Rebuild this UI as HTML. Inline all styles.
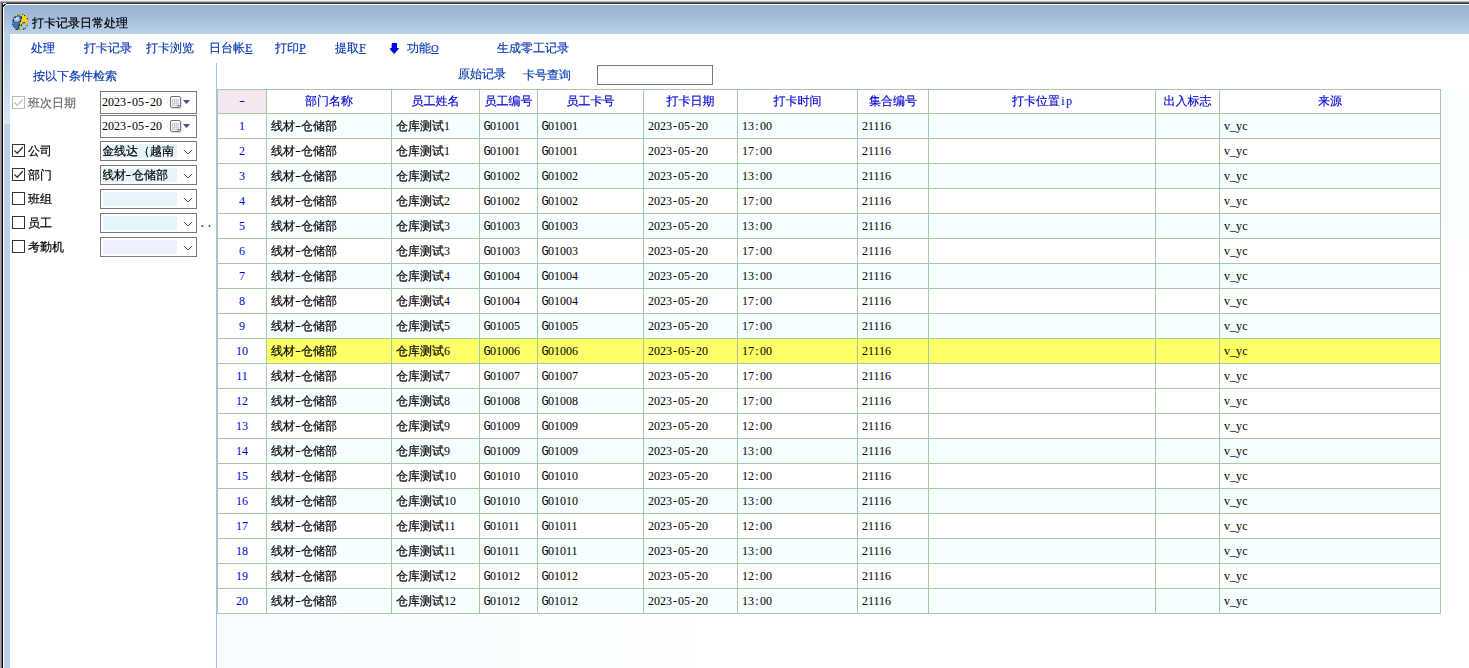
<!DOCTYPE html>
<html lang="zh-CN">
<head>
<meta charset="utf-8">
<title>打卡记录日常处理</title>
<style>
*{box-sizing:border-box;margin:0;padding:0}
html,body{width:1469px;height:668px;overflow:hidden;background:#fff}
body{position:relative;font-family:"Liberation Mono","WenQuanYi Zen Hei","Noto Sans CJK SC",monospace;font-size:12px;line-height:14px;color:#000;-webkit-text-stroke:0.2px}
.l{font-family:"Liberation Serif",serif;letter-spacing:0;-webkit-text-stroke:0;line-height:0}
.l b{display:inline-block;width:6px;text-align:center;font-weight:normal}
.l b.g{font-family:"Liberation Mono",monospace;width:auto;margin:0 -0.6px}
.l b.wd{transform:scaleX(1.5)}
.abs{position:absolute}
/* window chrome */
#s0{left:0;top:0;width:1469px;height:1px;background:#f2f2f2}
#s1{left:0;top:1px;width:1469px;height:1px;background:#b4b4b4}
#s2{left:0;top:2px;width:1469px;height:1px;background:#6c6c6c}
#s3{left:2px;top:3px;width:1467px;height:1px;background:#2e2e2e}
#l0{left:0;top:2px;width:1px;height:666px;background:#a6a6a6}
#l1{left:1px;top:3px;width:1px;height:665px;background:#707070}
#l2{left:2px;top:3px;width:1px;height:665px;background:#040404}
#l3{left:3px;top:4px;width:1px;height:664px;background:#fff}
#hl{left:3px;top:4px;width:1466px;height:1px;background:#fff}
#tb{left:4px;top:5px;width:1465px;height:29px;background:linear-gradient(#98b2d2,#a3bcda 40%,#b9d1ea)}
#lb{left:4px;top:34px;width:6px;height:634px;background:linear-gradient(#b9d1ea 0,#bcd3eb 25px,#dbe7f5 90px,#b9d1ea 90px)}
#title{left:32px;top:17px;white-space:nowrap}
#icon{left:12px;top:14px;width:16px;height:16px}
/* menu */
.m{position:absolute;top:42px;color:#0a3cb4;white-space:nowrap;-webkit-text-stroke:0.18px}
.m u{text-decoration:underline;text-decoration-thickness:1px;text-underline-offset:1px;font-size:12px;-webkit-text-stroke:0.2px}
.b{position:absolute;color:#0a3cb4;white-space:nowrap;-webkit-text-stroke:0.18px}
/* left panel */
.cb{position:absolute;left:12px;width:13px;height:13px;border:1px solid #333;background:#fff}
.cb.dis{border-color:#bcbcbc}
.cb svg{position:absolute;left:0;top:0}
.lab{position:absolute;left:28px;white-space:nowrap}
.date{position:absolute;left:100px;width:97px;height:23px;border:1px solid #7a7a7a;background:#fff}
.date span{position:absolute;left:1px;top:3px;line-height:14px}
.date svg{position:absolute;left:69px;top:4px}
.combo{position:absolute;left:100px;width:97px;height:20px;border:1px solid #7a7a7a;background:#fff}
.combo i{position:absolute;left:2px;top:2px;width:74px;height:14px;background:#e4f5fc;font-style:normal;padding-top:1px;text-indent:-1px;white-space:nowrap;overflow:hidden}
.combo svg{position:absolute;left:82px;top:7px}
/* grid */
#gbg{left:217px;top:89px;width:1252px;height:579px;background:linear-gradient(to right,#f7fdff,#f9feff 300px,#fff 480px) 0 525px/700px 54px no-repeat,linear-gradient(#f9feff,#fafeff 120px,#fff 180px) 1224px 0/28px 200px no-repeat,#fff}
#vline{left:216px;top:63px;width:1px;height:605px;background:#9fc3ee}
#grid{left:217px;top:89px;width:1224px;height:525px;background:#a4cba4;padding:1px;display:grid;gap:1px;
 grid-template-columns:48px 124px 87px 57px 105px 93px 119px 70px 226px 63px 220px;
 grid-template-rows:23px repeat(20,24px)}
#grid div{overflow:hidden;white-space:nowrap;line-height:14px;padding-top:6px}
.h{background:#fff;color:#0000d2;text-align:center;-webkit-text-stroke:0.15px;padding-top:5px !important}
.h0{background:#f6e6f0}
.n{background:#fff;color:#0000d2;text-align:center}
.d{padding-left:4px}
.w{background:#fff}.c{background:#f6feff}.y{background:#ffff66}
</style>
</head>
<body>
<div class="abs" id="s0"></div><div class="abs" id="s1"></div><div class="abs" id="s2"></div><div class="abs" id="s3"></div>
<div class="abs" id="l0"></div><div class="abs" id="l1"></div><div class="abs" id="l2"></div>
<div class="abs" id="hl"></div><div class="abs" id="l3"></div>
<div class="abs" id="tb"></div><div class="abs" id="lb"></div>
<svg class="abs" style="left:2px;top:2px" width="5" height="6" viewBox="0 0 5 6" shape-rendering="crispEdges">
 <rect x="0" y="0" width="5" height="1" fill="#7a7a7a"/>
 <rect x="0" y="1" width="1" height="5" fill="#1c1c24"/>
 <rect x="1" y="1" width="3" height="1" fill="#e9ecf1"/><rect x="4" y="1" width="1" height="1" fill="#2e2e2e"/>
 <rect x="1" y="2" width="1" height="1" fill="#dfe5ec"/><rect x="2" y="2" width="2" height="1" fill="#262626"/><rect x="4" y="2" width="1" height="1" fill="#fff"/>
 <rect x="1" y="3" width="2" height="1" fill="#20242c"/><rect x="3" y="3" width="1" height="1" fill="#fff"/><rect x="4" y="3" width="1" height="1" fill="#a9c0dc"/>
 <rect x="1" y="4" width="1" height="1" fill="#2a2e36"/><rect x="2" y="4" width="1" height="1" fill="#fff"/><rect x="3" y="4" width="2" height="1" fill="#9ab4d3"/>
 <rect x="1" y="5" width="1" height="1" fill="#fff"/><rect x="2" y="5" width="3" height="1" fill="#9ab4d3"/>
</svg>
<svg class="abs" id="icon" viewBox="0 0 16 16">
 <circle cx="8" cy="8" r="7.800" fill="#3a78b2"/>
 <ellipse cx="4.700" cy="5" rx="2.900" ry="2.600" fill="#a9c3e0"/>
 <ellipse cx="5" cy="4.600" rx="1.500" ry="1.300" fill="#c9dbee"/>
 <path d="M6.500 .3L10 .2A7.800 7.800 0 0 1 15.800 8L15.800 10.500L14.600 10.300C14 9 12.800 8.600 11.800 8.800C10.600 9.200 9.600 10.400 9.300 12L9 15.500L7.200 15.300C7 13 7.200 11 7.800 9.500C8.600 7.500 9.600 5.500 9.400 3.500C9.300 2.300 8.400 1.400 6.500 .3Z" fill="#ffd400"/>
 <path d="M14.600 10.300L15.800 10.500A7.800 7.800 0 0 1 9 15.750L9.300 12C9.600 10.400 10.600 9.200 11.800 8.800C12.800 8.600 14 9 14.600 10.300Z" fill="#a6bfdc"/>
 <path d="M2.300 1.800h1v1h-1zM3.900 1h1v1h-1z" fill="#ffd400"/>
 <path d="M9.200 2.200L9.500 5M9 6.300L8.200 8.200M7.600 9.500L6.900 12M6.800 12.500L7 14.500M10.400 9.300C11 8.700 12 8.400 13 8.700M9.300 10.300L9.100 12.200M11 15.200L12.500 14.800M13.200 14.300L14 13.600M15.200 11L15.600 11.800M10 .3L10.800 .8M12 1.300L13 2M15.200 4L15.600 5.200M2 3.600L4.400 2.600M1.400 5.400L1.400 7.400M.4 10L.8 10.800M1.400 12.200L2 13M2.600 14L3.400 14.600M3.600 15.200L5.800 15.400" fill="none" stroke="#0a0a0a" stroke-width="1"/>
</svg>
<div class="abs" id="title">打卡记录日常处理</div>

<div class="m" style="left:31px">处理</div>
<div class="m" style="left:84px">打卡记录</div>
<div class="m" style="left:146px">打卡浏览</div>
<div class="m" style="left:209px">日台帐<u class="l">E</u></div>
<div class="m" style="left:275px">打印<u class="l">P</u></div>
<div class="m" style="left:335px">提取<u class="l">F</u></div>
<svg class="abs" style="left:389px;top:43px" width="11" height="12" viewBox="0 0 11 12">
 <path d="M2.500 .8h5v5h2.300L5 11.300 .2 5.800h2.300z" fill="#2a2a10" opacity=".8"/>
 <path d="M3 0h5v5h2.200L5.500 10.400 .8 5h2.200z" fill="#0000ff"/>
</svg>
<div class="m" style="left:407px">功能<u class="l" style="font-size:10.500px">O</u></div>
<div class="m" style="left:497px">生成零工记录</div>

<div class="b" style="left:33px;top:70px">按以下条件检索</div>
<div class="b" style="left:458px;top:68px">原始记录</div>
<div class="b" style="left:523px;top:69px">卡号查询</div>
<div class="abs" style="left:597px;top:65px;width:116px;height:20px;border:1px solid #7a7a7a;background:#fff"></div>

<div class="cb dis" style="top:96px"><svg width="11" height="11" viewBox="0 0 11 11"><path d="M1.500 5.500l2.800 2.800 5.400-6" fill="none" stroke="#bcbcbc" stroke-width="1.2"/></svg></div>
<div class="lab" style="top:97px;color:#6a6a6a">班次日期</div>
<div class="date" style="top:91px"><span class="l">2023<b>-</b>05<b>-</b>20</span><svg width="22" height="14" viewBox="0 0 22 14"><rect x="1.500" y="1.500" width="10" height="11" rx="1.500" fill="#5a4a46" opacity=".35"/><rect x=".5" y=".5" width="10" height="11" rx="1.500" fill="#fdfdfe" stroke="#7d6e6c"/><rect x="2" y="3" width="7" height="7" fill="#c3cbdc"/><path d="M3 4h1v1h-1zM5 4h1v1h-1zM7 4h1v1h-1zM3 6h1v1h-1zM5 6h1v1h-1zM7 6h1v1h-1zM3 8h1v1h-1zM5 8h1v1h-1zM7 8h1v1h-1z" fill="#fff"/><path d="M8 11.500V9.500h2.500" fill="#fff" stroke="#7d6e6c"/><path d="M13 4h7L16.500 8z" fill="#3c5080"/></svg></div>
<div class="date" style="top:115px"><span class="l">2023<b>-</b>05<b>-</b>20</span><svg width="22" height="14" viewBox="0 0 22 14"><rect x="1.500" y="1.500" width="10" height="11" rx="1.500" fill="#5a4a46" opacity=".35"/><rect x=".5" y=".5" width="10" height="11" rx="1.500" fill="#fdfdfe" stroke="#7d6e6c"/><rect x="2" y="3" width="7" height="7" fill="#c3cbdc"/><path d="M3 4h1v1h-1zM5 4h1v1h-1zM7 4h1v1h-1zM3 6h1v1h-1zM5 6h1v1h-1zM7 6h1v1h-1zM3 8h1v1h-1zM5 8h1v1h-1zM7 8h1v1h-1z" fill="#fff"/><path d="M8 11.500V9.500h2.500" fill="#fff" stroke="#7d6e6c"/><path d="M13 4h7L16.500 8z" fill="#3c5080"/></svg></div>

<div class="cb" style="top:144px"><svg width="11" height="11" viewBox="0 0 11 11"><path d="M1.500 5.500l2.800 2.800 5.400-6" fill="none" stroke="#333" stroke-width="1.300"/></svg></div><div class="lab" style="top:145px">公司</div>
<div class="cb" style="top:168px"><svg width="11" height="11" viewBox="0 0 11 11"><path d="M1.500 5.500l2.800 2.800 5.400-6" fill="none" stroke="#333" stroke-width="1.300"/></svg></div><div class="lab" style="top:169px">部门</div>
<div class="cb" style="top:192px"></div><div class="lab" style="top:193px">班组</div>
<div class="cb" style="top:216px"></div><div class="lab" style="top:217px">员工</div>
<div class="cb" style="top:240px"></div><div class="lab" style="top:241px">考勤机</div>

<div class="combo" style="top:141px"><i>金线达（越南</i><svg width="10" height="6" viewBox="0 0 10 6"><path d="M.8 .8L5 5l4.200-4.200" fill="none" stroke="#4a4a4a" stroke-width="1"/></svg></div>
<div class="combo" style="top:165px"><i>线材<span class="l"><b class="wd">-</b></span>仓储部</i><svg width="10" height="6" viewBox="0 0 10 6"><path d="M.8 .8L5 5l4.200-4.200" fill="none" stroke="#4a4a4a" stroke-width="1"/></svg></div>
<div class="combo" style="top:189px"><i></i><svg width="10" height="6" viewBox="0 0 10 6"><path d="M.8 .8L5 5l4.200-4.200" fill="none" stroke="#4a4a4a" stroke-width="1"/></svg></div>
<div class="combo" style="top:213px"><i></i><svg width="10" height="6" viewBox="0 0 10 6"><path d="M.8 .8L5 5l4.200-4.200" fill="none" stroke="#4a4a4a" stroke-width="1"/></svg></div>
<div class="combo" style="top:237px"><i style="background:#eef0ff"></i><svg width="10" height="6" viewBox="0 0 10 6"><path d="M.8 .8L5 5l4.200-4.200" fill="none" stroke="#4a4a4a" stroke-width="1"/></svg></div>
<div class="b" style="left:198.500px;top:217px;font-family:'Liberation Mono',monospace;-webkit-text-stroke:0">..</div>

<div class="abs" id="gbg"></div>
<div class="abs" id="vline"></div>
<div class="abs" id="grid">
<div class="h h0"><span class="l"><b class="wd">-</b></span></div>
<div class="h">部门名称</div>
<div class="h">员工姓名</div>
<div class="h">员工编号</div>
<div class="h">员工卡号</div>
<div class="h">打卡日期</div>
<div class="h">打卡时间</div>
<div class="h">集合编号</div>
<div class="h">打卡位置<span class="l"><b>i</b><b>p</b></span></div>
<div class="h">出入标志</div>
<div class="h">来源</div>
<div class="n"><span class="l">1</span></div>
<div class="d c">线材<span class="l"><b class="wd">-</b></span>仓储部</div>
<div class="d c">仓库测试<span class="l">1</span></div>
<div class="d c"><span class="l"><b class="g">G</b>01001</span></div>
<div class="d c"><span class="l"><b class="g">G</b>01001</span></div>
<div class="d c"><span class="l">2023<b>-</b>05<b>-</b>20</span></div>
<div class="d c"><span class="l">13<b>:</b>00</span></div>
<div class="d c"><span class="l">21116</span></div>
<div class="d c"></div>
<div class="d c"></div>
<div class="d c"><span class="l"><b>v</b><b>_</b><b>y</b><b>c</b></span></div>
<div class="n"><span class="l">2</span></div>
<div class="d w">线材<span class="l"><b class="wd">-</b></span>仓储部</div>
<div class="d w">仓库测试<span class="l">1</span></div>
<div class="d w"><span class="l"><b class="g">G</b>01001</span></div>
<div class="d w"><span class="l"><b class="g">G</b>01001</span></div>
<div class="d w"><span class="l">2023<b>-</b>05<b>-</b>20</span></div>
<div class="d w"><span class="l">17<b>:</b>00</span></div>
<div class="d w"><span class="l">21116</span></div>
<div class="d w"></div>
<div class="d w"></div>
<div class="d w"><span class="l"><b>v</b><b>_</b><b>y</b><b>c</b></span></div>
<div class="n"><span class="l">3</span></div>
<div class="d c">线材<span class="l"><b class="wd">-</b></span>仓储部</div>
<div class="d c">仓库测试<span class="l">2</span></div>
<div class="d c"><span class="l"><b class="g">G</b>01002</span></div>
<div class="d c"><span class="l"><b class="g">G</b>01002</span></div>
<div class="d c"><span class="l">2023<b>-</b>05<b>-</b>20</span></div>
<div class="d c"><span class="l">13<b>:</b>00</span></div>
<div class="d c"><span class="l">21116</span></div>
<div class="d c"></div>
<div class="d c"></div>
<div class="d c"><span class="l"><b>v</b><b>_</b><b>y</b><b>c</b></span></div>
<div class="n"><span class="l">4</span></div>
<div class="d w">线材<span class="l"><b class="wd">-</b></span>仓储部</div>
<div class="d w">仓库测试<span class="l">2</span></div>
<div class="d w"><span class="l"><b class="g">G</b>01002</span></div>
<div class="d w"><span class="l"><b class="g">G</b>01002</span></div>
<div class="d w"><span class="l">2023<b>-</b>05<b>-</b>20</span></div>
<div class="d w"><span class="l">17<b>:</b>00</span></div>
<div class="d w"><span class="l">21116</span></div>
<div class="d w"></div>
<div class="d w"></div>
<div class="d w"><span class="l"><b>v</b><b>_</b><b>y</b><b>c</b></span></div>
<div class="n"><span class="l">5</span></div>
<div class="d c">线材<span class="l"><b class="wd">-</b></span>仓储部</div>
<div class="d c">仓库测试<span class="l">3</span></div>
<div class="d c"><span class="l"><b class="g">G</b>01003</span></div>
<div class="d c"><span class="l"><b class="g">G</b>01003</span></div>
<div class="d c"><span class="l">2023<b>-</b>05<b>-</b>20</span></div>
<div class="d c"><span class="l">13<b>:</b>00</span></div>
<div class="d c"><span class="l">21116</span></div>
<div class="d c"></div>
<div class="d c"></div>
<div class="d c"><span class="l"><b>v</b><b>_</b><b>y</b><b>c</b></span></div>
<div class="n"><span class="l">6</span></div>
<div class="d w">线材<span class="l"><b class="wd">-</b></span>仓储部</div>
<div class="d w">仓库测试<span class="l">3</span></div>
<div class="d w"><span class="l"><b class="g">G</b>01003</span></div>
<div class="d w"><span class="l"><b class="g">G</b>01003</span></div>
<div class="d w"><span class="l">2023<b>-</b>05<b>-</b>20</span></div>
<div class="d w"><span class="l">17<b>:</b>00</span></div>
<div class="d w"><span class="l">21116</span></div>
<div class="d w"></div>
<div class="d w"></div>
<div class="d w"><span class="l"><b>v</b><b>_</b><b>y</b><b>c</b></span></div>
<div class="n"><span class="l">7</span></div>
<div class="d c">线材<span class="l"><b class="wd">-</b></span>仓储部</div>
<div class="d c">仓库测试<span class="l">4</span></div>
<div class="d c"><span class="l"><b class="g">G</b>01004</span></div>
<div class="d c"><span class="l"><b class="g">G</b>01004</span></div>
<div class="d c"><span class="l">2023<b>-</b>05<b>-</b>20</span></div>
<div class="d c"><span class="l">13<b>:</b>00</span></div>
<div class="d c"><span class="l">21116</span></div>
<div class="d c"></div>
<div class="d c"></div>
<div class="d c"><span class="l"><b>v</b><b>_</b><b>y</b><b>c</b></span></div>
<div class="n"><span class="l">8</span></div>
<div class="d w">线材<span class="l"><b class="wd">-</b></span>仓储部</div>
<div class="d w">仓库测试<span class="l">4</span></div>
<div class="d w"><span class="l"><b class="g">G</b>01004</span></div>
<div class="d w"><span class="l"><b class="g">G</b>01004</span></div>
<div class="d w"><span class="l">2023<b>-</b>05<b>-</b>20</span></div>
<div class="d w"><span class="l">17<b>:</b>00</span></div>
<div class="d w"><span class="l">21116</span></div>
<div class="d w"></div>
<div class="d w"></div>
<div class="d w"><span class="l"><b>v</b><b>_</b><b>y</b><b>c</b></span></div>
<div class="n"><span class="l">9</span></div>
<div class="d c">线材<span class="l"><b class="wd">-</b></span>仓储部</div>
<div class="d c">仓库测试<span class="l">5</span></div>
<div class="d c"><span class="l"><b class="g">G</b>01005</span></div>
<div class="d c"><span class="l"><b class="g">G</b>01005</span></div>
<div class="d c"><span class="l">2023<b>-</b>05<b>-</b>20</span></div>
<div class="d c"><span class="l">17<b>:</b>00</span></div>
<div class="d c"><span class="l">21116</span></div>
<div class="d c"></div>
<div class="d c"></div>
<div class="d c"><span class="l"><b>v</b><b>_</b><b>y</b><b>c</b></span></div>
<div class="n"><span class="l">10</span></div>
<div class="d y">线材<span class="l"><b class="wd">-</b></span>仓储部</div>
<div class="d y">仓库测试<span class="l">6</span></div>
<div class="d y"><span class="l"><b class="g">G</b>01006</span></div>
<div class="d y"><span class="l"><b class="g">G</b>01006</span></div>
<div class="d y"><span class="l">2023<b>-</b>05<b>-</b>20</span></div>
<div class="d y"><span class="l">17<b>:</b>00</span></div>
<div class="d y"><span class="l">21116</span></div>
<div class="d y"></div>
<div class="d y"></div>
<div class="d y"><span class="l"><b>v</b><b>_</b><b>y</b><b>c</b></span></div>
<div class="n"><span class="l">11</span></div>
<div class="d w">线材<span class="l"><b class="wd">-</b></span>仓储部</div>
<div class="d w">仓库测试<span class="l">7</span></div>
<div class="d w"><span class="l"><b class="g">G</b>01007</span></div>
<div class="d w"><span class="l"><b class="g">G</b>01007</span></div>
<div class="d w"><span class="l">2023<b>-</b>05<b>-</b>20</span></div>
<div class="d w"><span class="l">17<b>:</b>00</span></div>
<div class="d w"><span class="l">21116</span></div>
<div class="d w"></div>
<div class="d w"></div>
<div class="d w"><span class="l"><b>v</b><b>_</b><b>y</b><b>c</b></span></div>
<div class="n"><span class="l">12</span></div>
<div class="d c">线材<span class="l"><b class="wd">-</b></span>仓储部</div>
<div class="d c">仓库测试<span class="l">8</span></div>
<div class="d c"><span class="l"><b class="g">G</b>01008</span></div>
<div class="d c"><span class="l"><b class="g">G</b>01008</span></div>
<div class="d w"><span class="l">2023<b>-</b>05<b>-</b>20</span></div>
<div class="d w"><span class="l">17<b>:</b>00</span></div>
<div class="d w"><span class="l">21116</span></div>
<div class="d w"></div>
<div class="d w"></div>
<div class="d w"><span class="l"><b>v</b><b>_</b><b>y</b><b>c</b></span></div>
<div class="n"><span class="l">13</span></div>
<div class="d w">线材<span class="l"><b class="wd">-</b></span>仓储部</div>
<div class="d w">仓库测试<span class="l">9</span></div>
<div class="d w"><span class="l"><b class="g">G</b>01009</span></div>
<div class="d w"><span class="l"><b class="g">G</b>01009</span></div>
<div class="d w"><span class="l">2023<b>-</b>05<b>-</b>20</span></div>
<div class="d w"><span class="l">12<b>:</b>00</span></div>
<div class="d w"><span class="l">21116</span></div>
<div class="d w"></div>
<div class="d w"></div>
<div class="d w"><span class="l"><b>v</b><b>_</b><b>y</b><b>c</b></span></div>
<div class="n"><span class="l">14</span></div>
<div class="d c">线材<span class="l"><b class="wd">-</b></span>仓储部</div>
<div class="d c">仓库测试<span class="l">9</span></div>
<div class="d c"><span class="l"><b class="g">G</b>01009</span></div>
<div class="d c"><span class="l"><b class="g">G</b>01009</span></div>
<div class="d c"><span class="l">2023<b>-</b>05<b>-</b>20</span></div>
<div class="d c"><span class="l">13<b>:</b>00</span></div>
<div class="d c"><span class="l">21116</span></div>
<div class="d c"></div>
<div class="d c"></div>
<div class="d c"><span class="l"><b>v</b><b>_</b><b>y</b><b>c</b></span></div>
<div class="n"><span class="l">15</span></div>
<div class="d w">线材<span class="l"><b class="wd">-</b></span>仓储部</div>
<div class="d w">仓库测试<span class="l">10</span></div>
<div class="d w"><span class="l"><b class="g">G</b>01010</span></div>
<div class="d w"><span class="l"><b class="g">G</b>01010</span></div>
<div class="d w"><span class="l">2023<b>-</b>05<b>-</b>20</span></div>
<div class="d w"><span class="l">12<b>:</b>00</span></div>
<div class="d w"><span class="l">21116</span></div>
<div class="d w"></div>
<div class="d w"></div>
<div class="d w"><span class="l"><b>v</b><b>_</b><b>y</b><b>c</b></span></div>
<div class="n"><span class="l">16</span></div>
<div class="d c">线材<span class="l"><b class="wd">-</b></span>仓储部</div>
<div class="d c">仓库测试<span class="l">10</span></div>
<div class="d c"><span class="l"><b class="g">G</b>01010</span></div>
<div class="d c"><span class="l"><b class="g">G</b>01010</span></div>
<div class="d c"><span class="l">2023<b>-</b>05<b>-</b>20</span></div>
<div class="d c"><span class="l">13<b>:</b>00</span></div>
<div class="d c"><span class="l">21116</span></div>
<div class="d c"></div>
<div class="d c"></div>
<div class="d c"><span class="l"><b>v</b><b>_</b><b>y</b><b>c</b></span></div>
<div class="n"><span class="l">17</span></div>
<div class="d w">线材<span class="l"><b class="wd">-</b></span>仓储部</div>
<div class="d w">仓库测试<span class="l">11</span></div>
<div class="d w"><span class="l"><b class="g">G</b>01011</span></div>
<div class="d w"><span class="l"><b class="g">G</b>01011</span></div>
<div class="d w"><span class="l">2023<b>-</b>05<b>-</b>20</span></div>
<div class="d w"><span class="l">12<b>:</b>00</span></div>
<div class="d w"><span class="l">21116</span></div>
<div class="d w"></div>
<div class="d w"></div>
<div class="d w"><span class="l"><b>v</b><b>_</b><b>y</b><b>c</b></span></div>
<div class="n"><span class="l">18</span></div>
<div class="d c">线材<span class="l"><b class="wd">-</b></span>仓储部</div>
<div class="d c">仓库测试<span class="l">11</span></div>
<div class="d c"><span class="l"><b class="g">G</b>01011</span></div>
<div class="d c"><span class="l"><b class="g">G</b>01011</span></div>
<div class="d c"><span class="l">2023<b>-</b>05<b>-</b>20</span></div>
<div class="d c"><span class="l">13<b>:</b>00</span></div>
<div class="d c"><span class="l">21116</span></div>
<div class="d c"></div>
<div class="d c"></div>
<div class="d c"><span class="l"><b>v</b><b>_</b><b>y</b><b>c</b></span></div>
<div class="n"><span class="l">19</span></div>
<div class="d w">线材<span class="l"><b class="wd">-</b></span>仓储部</div>
<div class="d w">仓库测试<span class="l">12</span></div>
<div class="d w"><span class="l"><b class="g">G</b>01012</span></div>
<div class="d w"><span class="l"><b class="g">G</b>01012</span></div>
<div class="d w"><span class="l">2023<b>-</b>05<b>-</b>20</span></div>
<div class="d w"><span class="l">12<b>:</b>00</span></div>
<div class="d w"><span class="l">21116</span></div>
<div class="d w"></div>
<div class="d w"></div>
<div class="d w"><span class="l"><b>v</b><b>_</b><b>y</b><b>c</b></span></div>
<div class="n"><span class="l">20</span></div>
<div class="d c">线材<span class="l"><b class="wd">-</b></span>仓储部</div>
<div class="d c">仓库测试<span class="l">12</span></div>
<div class="d c"><span class="l"><b class="g">G</b>01012</span></div>
<div class="d c"><span class="l"><b class="g">G</b>01012</span></div>
<div class="d c"><span class="l">2023<b>-</b>05<b>-</b>20</span></div>
<div class="d c"><span class="l">13<b>:</b>00</span></div>
<div class="d c"><span class="l">21116</span></div>
<div class="d c"></div>
<div class="d c"></div>
<div class="d c"><span class="l"><b>v</b><b>_</b><b>y</b><b>c</b></span></div>
</div>
</body>
</html>
